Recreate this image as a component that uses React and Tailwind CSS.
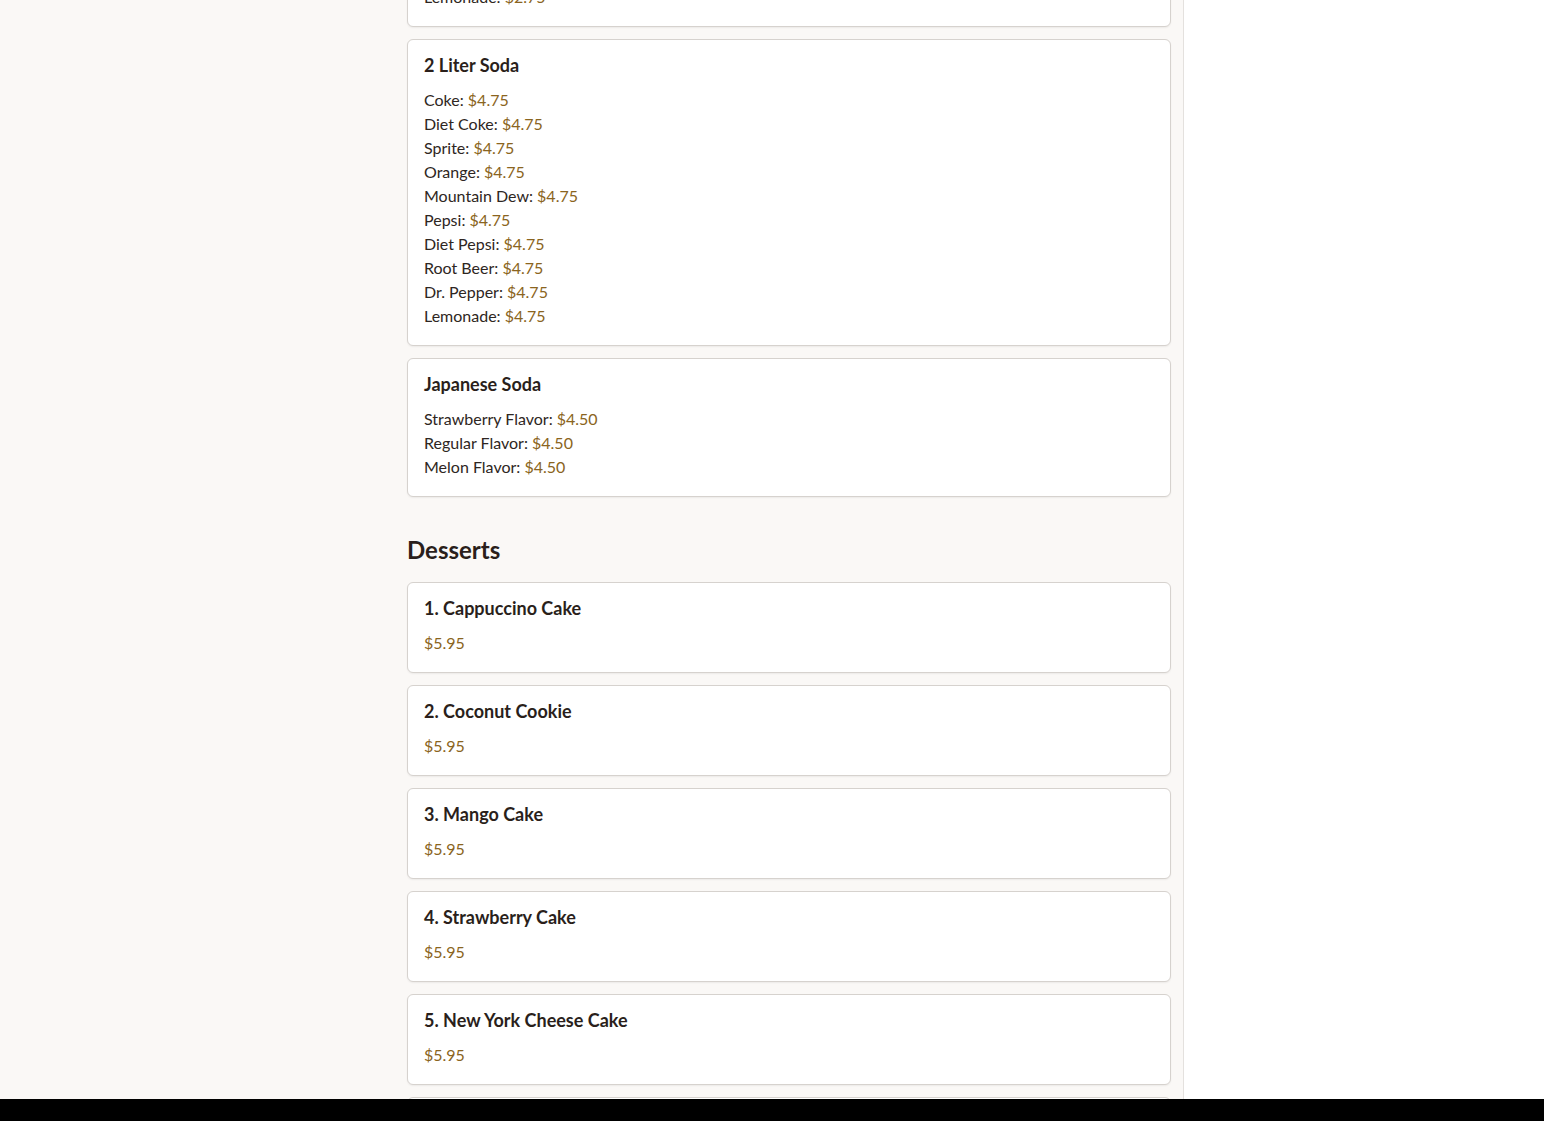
import React from "react";

const regularSoda = [
  "Coke", "Diet Coke", "Sprite", "Orange", "Mountain Dew",
  "Pepsi", "Diet Pepsi", "Root Beer", "Dr. Pepper", "Lemonade",
];

const drinks = [
  { title: "Regular Soda", items: regularSoda.map((n) => [n, "$2.75"]) },
  { title: "2 Liter Soda", items: regularSoda.map((n) => [n, "$4.75"]) },
  {
    title: "Japanese Soda",
    items: [
      ["Strawberry Flavor", "$4.50"],
      ["Regular Flavor", "$4.50"],
      ["Melon Flavor", "$4.50"],
    ],
  },
];

const desserts = [
  "1. Cappuccino Cake",
  "2. Coconut Cookie",
  "3. Mango Cake",
  "4. Strawberry Cake",
  "5. New York Cheese Cake",
  "6. Tiramisu",
];

const Card = ({ title, children }) => (
  <div className="bg-white border border-[#d6d2ce] rounded-md shadow-[0_1px_2px_rgba(0,0,0,0.06)] px-4 pt-[15px] pb-[17px]">
    <h3 className="text-[18px] leading-[21px] font-bold text-[#2a1f1b] mb-[12px]">{title}</h3>
    {children}
  </div>
);

const App = () => {
  return (
    <div
      className="h-screen overflow-hidden flex bg-[#faf8f6] text-[#2a1f1b]"
      style={{ fontFamily: "Lato, 'Noto Sans', sans-serif" }}
    >
      <aside className="w-[395px] shrink-0" />
      <main className="w-[789px] shrink-0 px-3 border-r border-[#e4e1de]">
        {/* scrolled list: the regular soda card sits mostly above the fold */}
        <div className="flex flex-col gap-3 mt-[-280px]">
          {drinks.map((d) => (
            <Card key={d.title} title={d.title}>
              <ul>
                {d.items.map(([name, price]) => (
                  <li key={name} className="text-[16px] leading-6 text-[#2e2622]">
                    {name}: <span className="text-[#8a6420]">{price}</span>
                  </li>
                ))}
              </ul>
            </Card>
          ))}
        </div>

        <h2 className="text-[24px] leading-8 font-bold text-[#2a1f1b] mt-[37px] mb-4">Desserts</h2>

        <div className="flex flex-col gap-3 pb-10">
          {desserts.map((name) => (
            <Card key={name} title={name}>
              <p className="text-[16px] leading-6 text-[#8a6420]">$5.95</p>
            </Card>
          ))}
        </div>
      </main>
      <aside className="flex-1 bg-white" />

      <div className="fixed bottom-0 left-0 right-0 h-[22px] bg-black" />
    </div>
  );
};

export default App;
